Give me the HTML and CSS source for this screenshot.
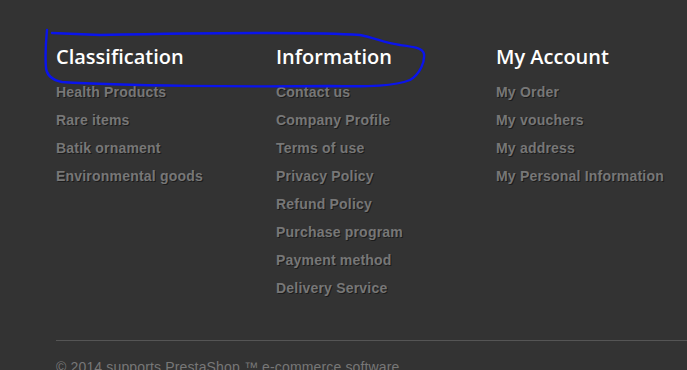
FILE: index.html
```html
<!DOCTYPE html>
<html lang="en">
<head>
    <meta charset="UTF-8" />
    <meta name="viewport" content="width=device-width, initial-scale=1.0" />
    <title>Footer</title>
    <link rel="stylesheet" href="styles.css">
</head>
<body>

<footer class="footer">
    <div class="columns">
        <section class="col">
            <h4>Classification</h4>
            <ul>
                <li><a href="#">Health Products</a></li>
                <li><a href="#">Rare items</a></li>
                <li><a href="#">Batik ornament</a></li>
                <li><a href="#">Environmental goods</a></li>
            </ul>
        </section>
        <section class="col">
            <h4>Information</h4>
            <ul>
                <li><a href="#">Contact us</a></li>
                <li><a href="#">Company Profile</a></li>
                <li><a href="#">Terms of use</a></li>
                <li><a href="#">Privacy Policy</a></li>
                <li><a href="#">Refund Policy</a></li>
                <li><a href="#">Purchase program</a></li>
                <li><a href="#">Payment method</a></li>
                <li><a href="#">Delivery Service</a></li>
            </ul>
        </section>
        <section class="col">
            <h4>My Account</h4>
            <ul>
                <li><a href="#">My Order</a></li>
                <li><a href="#">My vouchers</a></li>
                <li><a href="#">My address</a></li>
                <li><a href="#">My Personal Information</a></li>
            </ul>
        </section>
    </div>
    <div class="bottom">
        <p>&copy; 2014 supports PrestaShop &trade; e-commerce software</p>
    </div>
</footer>

<!-- hand-drawn marker around the first two headings -->
<svg class="scribble" width="687" height="370" viewBox="0 0 687 370">
    <path d="M47,30 C46,40 45,55 46,68 C47,76 52,80 62,82 C120,86 250,87 330,86 C370,87 395,86 410,80 C420,74 425,62 424,54 C423,48 415,47 400,45 C385,43 375,38 360,35 C320,32 200,33 100,35 L52,33"
          fill="none" stroke="#0a14ec" stroke-width="2.4" stroke-linecap="round" stroke-linejoin="round" />
</svg>

</body>
</html>
```

FILE: styles.css
```css
* {
    margin: 0;
    padding: 0;
    box-sizing: border-box;
}
body {
    background-color: #333333;
    font-family: "Liberation Sans", Arial, sans-serif;
    overflow: hidden;
}
.footer {
    padding: 45px 0 0 56px;
}
.columns {
    display: flex;
}
.col {
    width: 220px;
    flex-shrink: 0;
}
.col h4 {
    font-family: "Open Sans", sans-serif;
    font-weight: 600;
    font-size: 20px;
    line-height: 24px;
    color: #ffffff;
    margin-bottom: 9px;
}
.col ul {
    list-style: none;
}
.col li {
    font-size: 14px;
    line-height: 28px;
}
.col a {
    font-weight: bold;
    letter-spacing: 0.2px;
    color: #777777;
    text-decoration: none;
    text-shadow: 1px 1px 0 #1c1c1c;
}
.bottom {
    margin-top: 38px;
    border-top: 1px solid #555555;
    padding-top: 18px;
}
.bottom p {
    font-size: 14px;
    line-height: 16px;
    letter-spacing: 0.15px;
    color: #777777;
}
.scribble {
    position: absolute;
    top: 0;
    left: 0;
    pointer-events: none;
}
```
